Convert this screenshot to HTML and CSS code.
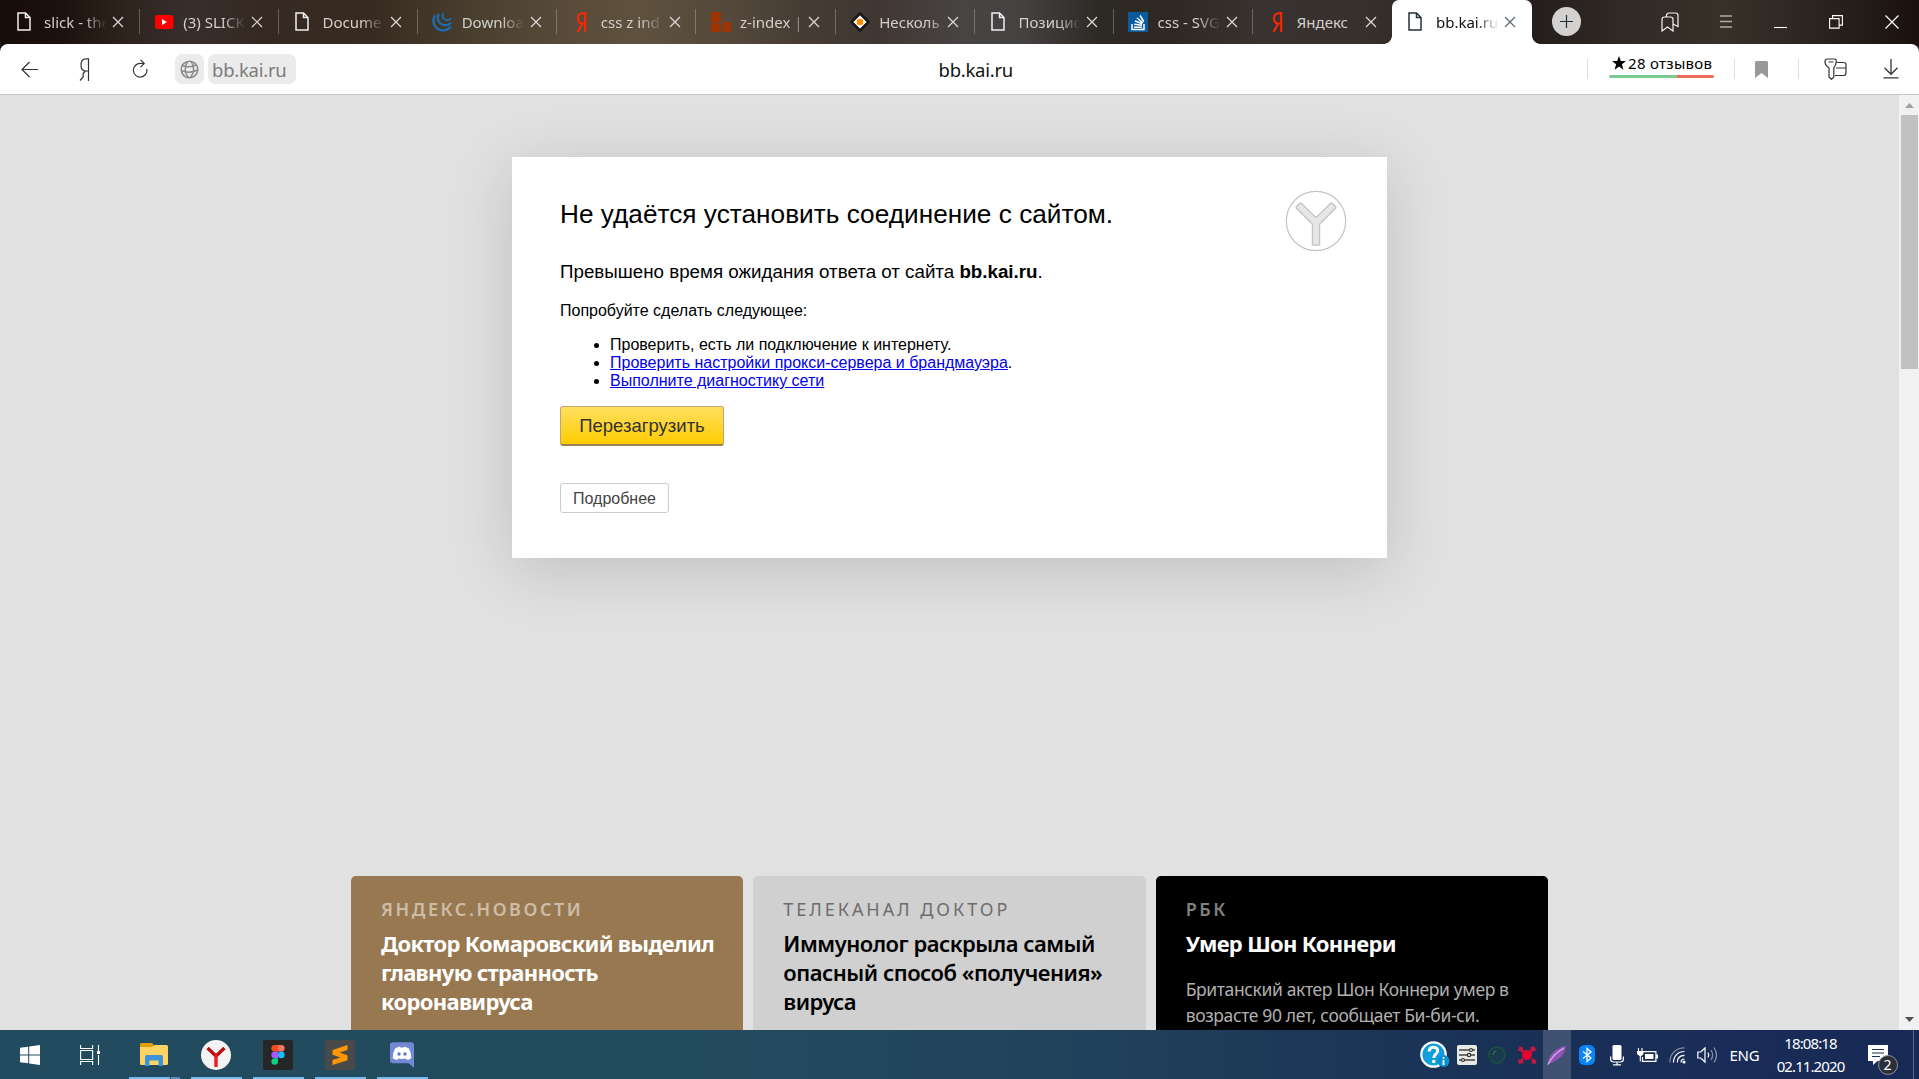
FILE: index.html
```html
<!DOCTYPE html>
<html lang="ru">
<head>
<meta charset="utf-8">
<title>bb.kai.ru</title>
<link rel="stylesheet" href="styles.css">
</head>
<body>
<svg class="defs" aria-hidden="true">
  <symbol id="i-page" viewBox="0 0 14 19"><path d="M1 1h7.5L13 5.500V18H1z M8.500 1v4.500H13" fill="none" stroke="currentColor" stroke-width="1.500"/></symbol>
  <symbol id="i-close" viewBox="0 0 12 12"><path d="M1 1l10 10M11 1L1 11" stroke="currentColor" stroke-width="1.200"/></symbol>
  <symbol id="i-ya" viewBox="0 0 11 20"><path d="M9.200 0v20M9.200 1.200H6.500C3.500 1.200 2 3.200 2 6.200s1.500 5.300 4.500 5.300h2.700M6.300 11.500L1.500 20" fill="none" stroke="currentColor" stroke-width="2.100"/></symbol>
</svg>

<header class="tabbar">
  <div class="tab"><svg class="fav page"><use href="#i-page"/></svg><span class="label">slick - the</span><svg class="close"><use href="#i-close"/></svg></div>
  <div class="tab"><svg class="fav" viewBox="0 0 20 20"><rect x="1" y="3" width="18.500" height="14" rx="3" fill="#f00"/><path d="M8 7l5 3-5 3z" fill="#fff"/></svg><span class="label">(3) SLICK</span><svg class="close"><use href="#i-close"/></svg></div>
  <div class="tab"><svg class="fav page"><use href="#i-page"/></svg><span class="label">Docume</span><svg class="close"><use href="#i-close"/></svg></div>
  <div class="tab"><svg class="fav" viewBox="0 0 20 20" fill="none" stroke="#1b6fb5" stroke-linecap="round"><path d="M2.800 4C-.5 10 3 17.500 9.500 18.300c3.500.4 6.500-.8 8.500-2.800" stroke-width="2.300"/><path d="M6.500 2.500c-2 5 .5 9.800 5.500 10.600 2.500.4 5-.3 6.500-1.800" stroke-width="2.100"/><path d="M11 1.500c-1.200 3 .2 6 3.200 6.500 1.800.3 3.300-.2 4.300-1.200" stroke-width="1.700"/></svg><span class="label">Downloa</span><svg class="close"><use href="#i-close"/></svg></div>
  <div class="tab"><svg class="fav ya"><use href="#i-ya"/></svg><span class="label">css z ind</span><svg class="close"><use href="#i-close"/></svg></div>
  <div class="tab"><svg class="fav" viewBox="0 0 20 20"><path d="M0 0h10v10H0zM0 11h10v9H0zM12 10h8v10h-8z" fill="#9c3404"/></svg><span class="label late">z-index |</span><svg class="close"><use href="#i-close"/></svg></div>
  <div class="tab"><svg class="fav" viewBox="0 0 20 20"><path d="M10 1.500l8.500 8.500-8.500 8.500L1.500 10z" fill="#fff" stroke="#181818" stroke-width="2.600"/><circle cx="10" cy="10" r="3.300" fill="#ff8a00"/></svg><span class="label late">Несколь</span><svg class="close"><use href="#i-close"/></svg></div>
  <div class="tab"><svg class="fav page"><use href="#i-page"/></svg><span class="label">Позицио</span><svg class="close"><use href="#i-close"/></svg></div>
  <div class="tab"><svg class="fav" viewBox="0 0 20 20"><path d="M0 0h20v20H0z" fill="#0a5b9e"/><path d="M4 12v5.500h12V12M6 15.200h8M6.200 12.200l7.800 1M7 9l7.300 2.800M9 6l6 4.800M12 3.500l3.800 6" fill="none" stroke="#fff" stroke-width="1.500"/></svg><span class="label">css - SVG</span><svg class="close"><use href="#i-close"/></svg></div>
  <div class="tab last"><svg class="fav ya"><use href="#i-ya"/></svg><span class="label full">Яндекс</span><svg class="close"><use href="#i-close"/></svg></div>
  <div class="tab active"><svg class="fav page"><use href="#i-page"/></svg><span class="label">bb.kai.ru</span><svg class="close"><use href="#i-close"/></svg></div>
  <button class="newtab" aria-label="Новая вкладка"><svg width="13" height="13" viewBox="0 0 13 13"><path d="M6.500 0v13M0 6.500h13" stroke="#1d2d3a" stroke-width="1.200"/></svg></button>
  <div class="winctl">
    <svg width="18" height="20" viewBox="0 0 18 20" fill="none" stroke="#f2f2f2" stroke-width="1.200"><path d="M1 7.500c0-1.500.8-2.500 2.300-2.500h6.400C11.200 5 12 6 12 7.500V19l-5.500-4L1 19z"/><path d="M5.500 5V3.500C5.500 2 6.500 1 8 1h6.500C16 1 17 2 17 3.500v11L12 12"/></svg>
    <svg width="12" height="13" viewBox="0 0 12 13"><path d="M0 1h12M0 6.500h12M0 12h12" stroke="#aeaba9" stroke-width="1.600"/></svg>
    <svg width="13" height="14" viewBox="0 0 13 14"><path d="M0 12.500h13" stroke="#fff" stroke-width="1.100"/></svg>
    <svg width="14" height="14" viewBox="0 0 14 14"><path d="M.6 3.600h9.500v9.500H.6zM3.600 3.600v-3h9.800v9.500h-3.300" fill="none" stroke="#fff" stroke-width="1.100"/></svg>
    <svg width="14" height="14" viewBox="0 0 14 14"><path d="M.5.500l13 13M13.500.500l-13 13" stroke="#fff" stroke-width="1.200"/></svg>
  </div>
</header>

<nav class="toolbar">
  <div class="nav-left">
    <svg width="17" height="17" viewBox="0 0 17 17" fill="none" stroke="#333" stroke-width="1.200"><path d="M17 8.500H1M8.500 1L1 8.500 8.500 16"/></svg>
    <svg width="11" height="23" viewBox="0 0 11 23" fill="none" stroke="#333" stroke-width="1.200"><path d="M9.500 23V.800H6.800C3.500.800 2 3.200 2 7s1.500 6 4.800 6h2.700M6.500 13L4.200 15.500V19L1 22.500"/></svg>
    <svg width="17" height="20" viewBox="0 0 17 20" fill="none" stroke="#333" stroke-width="1.200"><path d="M14.800 9.800a6.800 6.800 0 1 1-6-5.300h3M8.500.800L12.200 4.500 8.500 8.200"/></svg>
  </div>
  <span class="pill globe"><svg width="19" height="19" viewBox="0 0 19 19" fill="none" stroke="#8b8b8b" stroke-width="1.500"><circle cx="9.500" cy="9.500" r="8.300"/><path d="M7.500 1.500c-3 5-3 11 1 16.300M11 1.300c3.500 4.500 3.500 11-.5 16.300M2.300 5.500c4.500 1.800 9.500 1.500 14-.5M1.200 10.500c5 2.300 11.500 2 16.500-.5"/></svg></span>
  <span class="pill host">bb.kai.ru</span>
  <span class="title">bb.kai.ru</span>
  <div class="nav-right">
    <div class="reviews"><span class="stars"><svg width="14" height="14" viewBox="0 0 13 13"><path d="M6.500 0l1.700 4.700H13L9.200 7.700l1.400 5-4.100-3-4.100 3 1.400-5L0 4.700h4.800z"/></svg><span>28 отзывов</span></span><span class="rate"></span></div>
    <svg class="mark" width="13" height="17" viewBox="0 0 13 17"><path d="M0 1.500Q0 0 1.500 0h10Q13 0 13 1.500V17l-6.500-5L0 17z" fill="#999"/></svg>
    <div class="keys"><svg width="23" height="22" viewBox="0 0 23 22" fill="none" stroke="#333" stroke-width="1.200"><path d="M12.500 4.500h7c1.500 0 2.500 1 2.500 2.500v8c0 1.500-1 2.500-2.500 2.500h-8.700M12 10h10" /><path d="M3.500 1h6.500c1.500 0 2.500 1 2.300 2.500-.2 2.500-1 4.800-2.500 6.200V19l-2.300 2.300L5 19V9.700C2.500 8.500 1 6 1 3.500 1 2 2 1 3.500 1zM4.500 4h5"/></svg></div>
    <svg width="16" height="20" viewBox="0 0 16 20" fill="none" stroke="#333" stroke-width="1.300"><path d="M8 0v15M1.500 8.800L8 15.300l6.500-6.500M.5 18.800h15"/></svg>
  </div>
</nav>

<main class="viewport">
  <div class="page-area">
    <section class="card">
      <svg class="logo" width="62" height="62" viewBox="0 0 62 62"><circle cx="31" cy="31" r="29.700" fill="none" stroke="#c4c4c8" stroke-width="1.200"/><path d="M16.300 13.200L31 27.600 45.700 13.200q.7-.6 1.400 0l3.500 3.500q.6.800 0 1.500L34.600 34.200v20c0 .6-.4 1-1 1h-5.200c-.6 0-1-.4-1-1v-20L11.400 18.200q-.6-.7 0-1.500l3.500-3.500q.7-.6 1.400 0z" fill="#e6e6e6" stroke="#c4c4c8" stroke-width="1.300" stroke-linejoin="round"/></svg>
      <h1>Не удаётся установить соединение с сайтом.</h1>
      <p class="lead">Превышено время ожидания ответа от сайта <b>bb.kai.ru</b>.</p>
      <p>Попробуйте сделать следующее:</p>
      <ul>
        <li>Проверить, есть ли подключение к интернету.</li>
        <li><a href="#">Проверить настройки прокси-сервера и брандмауэра</a>.</li>
        <li><a href="#">Выполните диагностику сети</a></li>
      </ul>
      <button class="reload">Перезагрузить</button>
      <button class="more">Подробнее</button>
    </section>
    <section class="feed">
      <article class="news brown"><h3>ЯНДЕКС.НОВОСТИ</h3><h2>Доктор Комаровский выделил<br>главную странность<br>коронавируса</h2></article>
      <article class="news grey"><h3>ТЕЛЕКАНАЛ ДОКТОР</h3><h2>Иммунолог раскрыла самый<br>опасный способ «получения»<br>вируса</h2></article>
      <article class="news black"><h3>РБК</h3><h2>Умер Шон Коннери</h2><p>Британский актер Шон Коннери умер в<br>возрасте 90 лет, сообщает Би-би-си.</p></article>
    </section>
  </div>
  <div class="scroll">
    <svg width="9" height="5" viewBox="0 0 9 5"><path d="M4.500 0L9 5H0z" fill="#a0a0a0"/></svg>
    <span class="thumb"></span>
    <svg width="9" height="5" viewBox="0 0 9 5"><path d="M4.500 5L9 0H0z" fill="#505050"/></svg>
  </div>
</main>

<footer class="taskbar">
  <div class="apps">
    <span class="app sys"><svg width="20" height="20" viewBox="0 0 20 20" fill="#fff"><path d="M0 2.800L8.200 1.700v7.800H0zM9.200 1.500L20 0v9.500H9.200zM0 10.500h8.200v7.800L0 17.200zM9.200 10.500H20V20L9.200 18.500z"/></svg></span>
    <span class="app sys view"><svg width="20" height="20" viewBox="0 0 20 20" fill="none" stroke="#fff" stroke-width="1.100"><path d="M.6 0v3.500h12V0M.6 20v-3.500h12V20M.6 5.500h12v9H.6zM18.500 0v6M18.500 10v10"/><path d="M17 6h3v3h-3z" fill="#fff" stroke="none"/></svg></span>
    <span class="app run group"><svg width="28" height="24" viewBox="0 0 28 24"><path d="M0 1.500Q0 0 1.500 0H12l2 2-2 3H0z" fill="#e09d06"/><path d="M0 4h12l2.500-2H26.500Q28 2 28 3.500v17Q28 22 26.500 22h-25Q0 22 0 20.500z" fill="#ffd463"/><path d="M5 23V14q0-2 2-2h14q2 0 2 2v9h-4.500v-5.500h-9V23z" fill="#3c93da"/></svg></span>
    <span class="app run"><svg width="30" height="30" viewBox="0 0 30 30"><circle cx="15" cy="15" r="15" fill="#f3f3f3"/><path d="M6.500 8L15 16M23.500 8L15 16" stroke="#b80f12" stroke-width="3.400"/><path d="M15 15v12" stroke="#f0191c" stroke-width="3.400"/></svg></span>
    <span class="app run"><svg width="30" height="30" viewBox="0 0 30 30"><rect width="30" height="30" rx="2" fill="#262626"/><path d="M15 5h-3.300a3.300 3.300 0 0 0 0 6.600H15z" fill="#f24e1e"/><path d="M15 5h3.300a3.300 3.300 0 0 1 0 6.600H15z" fill="#ff7262"/><path d="M15 11.600h-3.300a3.300 3.300 0 0 0 0 6.600H15z" fill="#a259ff"/><circle cx="18.300" cy="14.900" r="3.300" fill="#1abcfe"/><path d="M15 18.200h-3.300a3.300 3.300 0 1 0 3.300 3.300z" fill="#0acf83"/></svg></span>
    <span class="app run"><svg width="30" height="30" viewBox="0 0 30 30"><rect width="30" height="30" rx="2" fill="#494949"/><path d="M22.500 5v5l-8 2.500 8 2.700v5L7.500 25v-5l8-2.500-8-2.700V10z" fill="#ff9800"/></svg></span>
    <span class="app run"><svg width="24" height="26" viewBox="0 0 24 26"><path d="M3 0h18q3 0 3 3v22.500L18.500 21H3q-3 0-3-3V3Q0 0 3 0z" fill="#7388d4" transform="translate(0 .3)"/><path d="M5 6.500Q8 4.500 10 4.700l.4.800h3.200l.4-.8q2 0 5 1.800 2.500 4.500 2.300 9.500-2 1.800-4.500 2l-1-1.500q-3.800.9-7.600 0l-1 1.500q-2.500-.2-4.500-2Q2.500 11 5 6.500z" fill="#fff"/><circle cx="9" cy="12" r="1.700" fill="#6478c6"/><circle cx="15" cy="12" r="1.700" fill="#6478c6"/></svg></span>
  </div>
  <div class="tray">
    <span class="cell help"><svg width="30" height="28" viewBox="0 0 30 28"><circle cx="13.500" cy="13.500" r="12.200" fill="#109fda" stroke="#fff" stroke-width="2.200"/><path d="M9.200 10.500c0-6 8.800-5.500 8.500-.5-.2 3-4 3.200-4 7M13.700 19v3" fill="none" stroke="#fff" stroke-width="3"/><circle cx="23.500" cy="20" r="6" fill="#0c8fce"/><path d="M23.500 16v1.800M23.500 19v5" stroke="#fff" stroke-width="1.800"/></svg></span>
    <span class="cell"><svg width="20" height="20" viewBox="0 0 20 20"><rect width="20" height="20" rx="2" fill="#e9e9e7"/><path d="M2 5h16M2 10h16M2 15h16" stroke="#444" stroke-width="1.400"/><g fill="#e9e9e7" stroke="#333" stroke-width="1.200"><circle cx="14" cy="5" r="1.500"/><circle cx="12" cy="10" r="1.700"/><circle cx="6" cy="15" r="1.500"/></g></svg></span>
    <span class="cell"><svg width="20" height="20" viewBox="0 0 20 20"><circle cx="10" cy="10" r="8" fill="#173b4c" stroke="#1d5345" stroke-width="1.400"/><path d="M6 10q0-3.500 3.500-4" fill="none" stroke="#47736c"/></svg></span>
    <span class="cell"><svg width="20" height="20" viewBox="0 0 20 20"><circle cx="10" cy="10" r="5" fill="#e8052f"/><path d="M.5 6.500L2.500 1.500l5 1.500-2 .8 1.500 2-2 2-2-2.300zM19.500 5.500L17 1l-5 2 2.300.5L13 5.800l2 2 2-2zM1 14l1 5 5.500-1-2-1 1.500-2-2-2-2 2zM19.500 14l-1 5-5-1 2-1-1.500-2 2-2 1.500 2z" fill="#c8183f"/></svg></span>
    <span class="cell feather"><svg width="20" height="20" viewBox="0 0 20 20"><path d="M1 19.500C0 13 6 4 19 .500 19 10 11 15 1 19.500z" fill="#9253b8"/><path d="M1 19.500C4 13 9 7.500 17 3" fill="none" stroke="#d9b5ea" stroke-width="1.300"/></svg></span>
    <span class="cell"><svg width="16" height="20" viewBox="0 0 16 20"><rect width="16" height="20" rx="5.500" fill="#0a84f7"/><path d="M4 6.500l8 6.500-4 3.500v-13L12 7l-8 6.500" fill="none" stroke="#fff" stroke-width="1.300"/></svg></span>
    <span class="cell"><svg width="14" height="21" viewBox="0 0 14 21"><rect x="2.500" width="9" height="15" rx="1.500" fill="#fff"/><path d="M.6 11.500v2.500q0 3 3 3h6.800q3 0 3-3v-2.500M7 17v2.500M3 19.800h8" fill="none" stroke="#fff" stroke-width="1.200"/></svg></span>
    <span class="cell"><svg width="21" height="15" viewBox="0 0 21 15"><path d="M5.500 3.600h13.400v9.800H5.500V9" fill="none" stroke="#fff" stroke-width="1.200"/><path d="M8 6h8.500v5H8zM19 6.500h2v4h-2zM0 3h6.500v3l-2 2H2.500L0 6z" fill="#fff"/><path d="M1.500 0v3M5 0v3M3.300 8v5.500" stroke="#fff" stroke-width="1.100"/></svg></span>
    <span class="cell"><svg width="17" height="18" viewBox="0 0 17 18" fill="none" stroke="#fff" stroke-width="1.200"><path d="M.8 16.500C.8 8 7 1.800 15.500 1.800" opacity=".45"/><path d="M4.500 16.500c0-6.500 4.500-11 11-11M8.300 16.500c0-4.500 2.800-7.200 7.200-7.200M12 16.500c0-2.300 1.200-3.500 3.500-3.500"/><circle cx="15" cy="16" r="1" fill="#fff"/></svg></span>
    <span class="cell"><svg width="21" height="18" viewBox="0 0 21 18" fill="none" stroke="#fff" stroke-width="1.200"><path d="M.8 6h3L8 2v14l-4.200-4h-3zM11 6.500q1.500 2.500 0 5"/><path d="M14 4q3.200 5 0 10M17 1.500q5 7.500 0 15" opacity=".5"/></svg></span>
    <span class="lang">ENG</span>
    <span class="clock"><span>18:08:18</span><span>02.11.2020</span></span>
    <span class="notif"><svg width="20" height="20" viewBox="0 0 20 20"><path d="M0 0h20v16H9.500L5 20v-4H0z" fill="#fff"/><path d="M4 4.500h12M4 8h12M4 11.500h8" stroke="#1a2f58" stroke-width="1.100"/></svg><span class="badge">2</span></span>
    <span class="peek"></span>
  </div>
</footer>
</body>
</html>
```

FILE: styles.css
```css
* { box-sizing: border-box; }
body {
  margin: 0;
  width: 1919px;
  height: 1079px;
  overflow: hidden;
  display: flex;
  flex-direction: column;
  font-family: "Liberation Sans", Arial, sans-serif;
  background: #1a0e0a;
}
h1, h2, h3, p, ul { margin: 0; }
button { font-family: inherit; padding: 0; }
svg { display: block; flex: none; }
.defs { position: absolute; width: 0; height: 0; }

/* tabs */
.tabbar {
  height: 44px;
  flex: none;
  display: flex;
  background:
    linear-gradient(90deg, #180c08 0, #1c110c 60px, #30241f 130px, #392e2c 190px, #352922 260px, #382a20 370px, #4b4030 480px, #584b39 570px, #5e513d 640px, #52473a 740px, #463c33 800px, #403733 880px, #474443 960px, #454242 1020px, #2d2925 1100px, #2f2822 1170px, #383330 1260px, #37302d 1360px, #241e1d 1540px, #302a26 1620px, #383129 1720px, #2d2722 1800px, #1a110e 1919px);
}
.tab {
  position: relative;
  width: 139.2px;
  flex: none;
  display: flex;
  align-items: center;
  padding: 0 0 1px 14.600px;
  color: #d3cfcb;
  font: 15px/44px "Noto Sans", sans-serif;
}
.tab::after {
  content: "";
  position: absolute;
  right: -.5px;
  top: 9px;
  width: 1px;
  height: 25px;
  background: rgba(255, 255, 255, .25);
}
.tab.last::after { display: none; }
.fav { width: 20px; height: 20px; }
.fav.page { width: 14px; height: 19px; margin: 0 4px 0 2px; color: #f0f0f0; }
.fav.ya { width: 11px; margin: 0 4px 0 5px; color: #fc2603; }
.label {
  width: 64px;
  margin-left: 9.500px;
  overflow: hidden;
  white-space: nowrap;
  mask-image: linear-gradient(90deg, #000 62%, transparent 98%);
}
.label.late { mask-image: linear-gradient(90deg, #000 75%, transparent 110%); }
.label.full { mask-image: none; }
.close { width: 12px; height: 12px; margin-left: 4px; color: #dedbd8; }
.active {
  width: 140.500px;
  background: #fff;
  border-radius: 7px 7px 0 0;
  color: #111;
}
.active .fav { color: #26313a; }
.active .close { color: #5c6770; }
.active::before, .active::after {
  content: "";
  position: absolute;
  top: auto;
  bottom: 0;
  width: 8px;
  height: 8px;
}
.active::before { left: -8px; background: radial-gradient(circle at 0 0, transparent 7.500px, #fff 8px); }
.active::after { right: -8px; background: radial-gradient(circle at 100% 0, transparent 7.500px, #fff 8px); }
.newtab {
  width: 29px;
  height: 29px;
  margin: 6.500px 0 0 20px;
  border: 0;
  border-radius: 50%;
  background: #d4d2d1;
  display: grid;
  place-items: center;
}
.winctl {
  margin-left: auto;
  padding-right: 20px;
  display: flex;
  align-items: center;
  gap: 42px;
  height: 43px;
}
.winctl svg:first-child { margin-right: -1px; }

/* address bar */
.toolbar {
  height: 51px;
  flex: none;
  display: flex;
  align-items: center;
  background: #fff;
  border-bottom: 1px solid #c6c6c6;
  border-radius: 8px 8px 0 0;
  font-family: "Noto Sans", sans-serif;
}
.nav-left { display: flex; align-items: center; padding-left: 21px; width: 175px; gap: 41px; }
.nav-left svg:last-child { margin-left: 1px; }
.pill {
  height: 30px;
  border-radius: 7px;
  background: #ebebeb;
  display: flex;
  align-items: center;
}
.globe { width: 29px; margin-right: 4px; justify-content: center; }
.host, .title { font-size: 18.500px; letter-spacing: -.25px; line-height: 30px; padding-top: 1px; }
.host { width: 88px; padding-left: 4px; color: #7b7b7b; }
.title { margin-left: 642.500px; color: #111; }
.nav-right { margin-left: auto; display: flex; align-items: center; padding-right: 20px; }
.reviews {
  display: flex;
  flex-direction: column;
  padding: 0 20px 0 21px;
  border-left: 1px solid #ddd;
  border-right: 1px solid #ddd;
  width: 148px;
  height: 20px;
  justify-content: center;
}
.stars { display: flex; align-items: center; gap: 2px; padding-left: 3px; font-size: 15px; letter-spacing: .3px; line-height: 22px; white-space: nowrap; margin-top: -9px; margin-bottom: 1px; }
.rate { height: 3px; flex: none; border-radius: 2px; background: linear-gradient(90deg, #7bcb91 65%, #ee6c5a 65%); }
.mark { margin: 0 30px 0 20px; }
.keys { border-left: 1px solid #ddd; height: 20px; padding: 0 36px 0 25px; display: flex; align-items: center; }

/* page */
.viewport { flex: 1; min-height: 0; display: flex; background: #e1e1e1; overflow: hidden; }
.page-area { flex: 1; display: flex; flex-direction: column; align-items: center; padding-top: 62px; }
.card {
  position: relative;
  width: 875px;
  height: 401px;
  flex: none;
  padding: 42px 48px;
  background: #fff;
  box-shadow: 0 12px 60px rgba(0, 0, 0, .15);
  display: flex;
  flex-direction: column;
  align-items: flex-start;
  font-size: 16px;
  line-height: 18px;
  color: #000;
}
.logo { position: absolute; right: 40px; top: 33px; }
h1 { font-size: 26.200px; font-weight: 400; line-height: 30px; margin-bottom: 32px; letter-spacing: .02px; }
.lead { font-size: 18.750px; line-height: 22px; margin-bottom: 19px; }
.card ul { padding-left: 50px; margin: 16px 0; }
.card a { color: #0000ee; }
.reload {
  width: 164px;
  height: 40px;
  border: 1px solid #bda673;
  border-bottom: 2px solid #9c8450;
  border-radius: 3px;
  background: linear-gradient(#ffdf60, #fc0);
  font-size: 18.500px;
  color: #333;
  margin-bottom: 37px;
}
.more {
  width: 109px;
  height: 30px;
  padding-top: 1px;
  border: 1px solid #ccc;
  border-radius: 3px;
  background: #fff;
  font-size: 16px;
  color: #444;
}

.feed { display: grid; grid-template-columns: repeat(3, 392.300px); gap: 10px; margin-top: 318px; height: 400px; flex: none; }
.news { border-radius: 5px; padding: 20px 30px; font-family: "Noto Sans", sans-serif; white-space: nowrap; }
.news h3 { font-size: 18px; line-height: 26px; font-weight: 600; letter-spacing: 2.550px; margin-bottom: 7px; }
.news h2 { font-size: 22px; line-height: 29px; font-weight: 700; letter-spacing: -.68px; }
.news p { font-size: 17.500px; line-height: 26px; letter-spacing: -.37px; margin-top: 18px; }
.brown { background: #987850; color: #fff; }
.brown h3 { color: #cdbda8; }
.grey { background: #d0d0d0; color: #000; }
.grey h3 { color: #6d6d6d; font-weight: 400; letter-spacing: 2.950px; }
.grey h2 { font-weight: 600; letter-spacing: -.5px; }
.black { background: #000; color: #fff; }
.black h3 { color: #808080; }
.black p { color: #b0b0b0; }

.scroll {
  width: 20px;
  background: #f1f1f1;
  display: flex;
  flex-direction: column;
  align-items: center;
  padding: 8px 0;
}
.thumb { width: 17px; height: 254px; margin: 7px 0 auto; background: #c1c1c1; }

/* taskbar */
.taskbar {
  height: 49px;
  flex: none;
  display: flex;
  justify-content: space-between;
  background: linear-gradient(90deg, #234b5f 0, #234b5e 700px, #21455c 1000px, #1d3858 1300px, #1a3156 1500px, #192c58 1750px, #172a55 1919px);
  color: #fff;
  font: 15px/23px "Noto Sans", sans-serif;
}
.apps { display: flex; gap: 11px; }
.app { width: 51px; height: 49px; display: grid; place-items: center; }
.app.sys { width: 60px; margin-right: -11px; }
.app.view { width: 69px; padding-right: 9px; }
.app.run { border-bottom: 2px solid #76b9ed; padding: 3px 1px 0 0; }
.apps .group { border-image: linear-gradient(90deg, #76b9ed 40px, #234b5e 40px, #234b5e 41px, #5b8eb8 41px) 2; }
.tray { display: flex; align-items: stretch; }
.cell { width: 30px; display: grid; place-items: center; padding-top: 1px; }
.cell.help { width: 35px; justify-items: end; padding: 1px 2px 0 0; }
.feather { width: 28px; margin: 0 1px; background: rgba(255, 255, 255, .17); }
.lang { width: 45px; padding-top: 14px; text-align: center; letter-spacing: -.2px; }
.clock { width: 87px; display: flex; flex-direction: column; align-items: center; padding-top: 2px; letter-spacing: -.9px; }
.notif { position: relative; width: 59px; padding: 15px 0 0 14px; }
.badge {
  position: absolute;
  left: 23.500px;
  top: 24.500px;
  width: 20px;
  height: 20px;
  border: 1px solid #8a8f99;
  border-radius: 50%;
  background: #2b2f38;
  font-size: 14px;
  line-height: 18px;
  text-align: center;
}
.peek { width: 6px; border-left: 1px solid #5c6b8a; }
```
